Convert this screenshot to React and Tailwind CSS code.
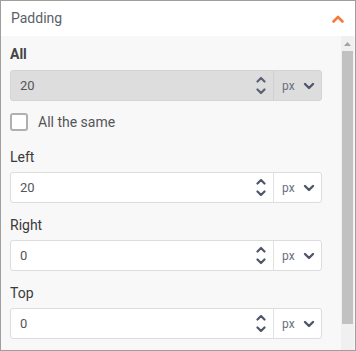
import { useState } from "react";

function Spinner({ muted }) {
    const c = muted ? "#5a6275" : "#4f5668";
    return (
        <div className="flex flex-col items-center justify-center gap-[5px] w-[14px] mr-[5px]">
            <svg width="10" height="7" viewBox="0 0 10 7">
                <path d="M1.5 5.5 L5 2 L8.5 5.5" fill="none" stroke={c} strokeWidth="2.2" strokeLinecap="round" strokeLinejoin="round" />
            </svg>
            <svg width="10" height="7" viewBox="0 0 10 7">
                <path d="M1.5 1.5 L5 5 L8.5 1.5" fill="none" stroke={c} strokeWidth="2.2" strokeLinecap="round" strokeLinejoin="round" />
            </svg>
        </div>
    );
}

function NumberField({ value, disabled }) {
    return (
        <div
            className={
                "flex h-[31px] w-[312px] rounded-[3px] border " +
                (disabled ? "bg-[#dddddd] border-[#d4d4d4]" : "bg-white border-[#dcdcdc]")
            }
        >
            <div className="flex flex-1 items-center pl-[9px]">
                <span className="flex-1 text-[13px] text-[#555]">{value}</span>
                <Spinner muted={disabled} />
            </div>
            <div className={"flex w-[48px] items-center justify-between pl-[8px] pr-[6px] border-l " + (disabled ? "border-[#d0d0d0]" : "border-[#e2e2e2]")}>
                <span className="text-[12px] text-[#6b7080]">px</span>
                <svg width="12" height="8" viewBox="0 0 12 8">
                    <path d="M2 2 L6 6 L10 2" fill="none" stroke="#4f5668" strokeWidth="2.4" strokeLinecap="round" strokeLinejoin="round" />
                </svg>
            </div>
        </div>
    );
}

function Label({ children, bold }) {
    return (
        <div className={"h-[20px] leading-[20px] text-[14px] " + (bold ? "font-bold text-[#444]" : "font-normal text-[#3a3a3a]")}>
            {children}
        </div>
    );
}

export default function App() {
    const [same, setSame] = useState(false);

    return (
        <div
            className="w-[356px] h-[351px] border border-[#9e9e9e] bg-white flex flex-col overflow-hidden"
            style={{ fontFamily: "Roboto, 'Liberation Sans', sans-serif" }}
        >
            <div className="h-[35px] shrink-0 flex items-center justify-between pl-[10px] pr-[10px] bg-white">
                <span className="text-[14px] text-[#5b5f6b]">Padding</span>
                <svg width="14" height="10" viewBox="0 0 14 10">
                    <path d="M2.5 7.5 L7 3 L11.5 7.5" fill="none" stroke="#f47b3a" strokeWidth="2.6" strokeLinecap="round" strokeLinejoin="round" />
                </svg>
            </div>

            <div className="flex flex-1 min-h-0 bg-[#f8f8f8]">
                <div className="flex-1 pl-[9px] pt-[8px]">
                    <Label bold>All</Label>
                    <div className="mt-[6px]">
                        <NumberField value="20" disabled />
                    </div>

                    <label className="mt-[12px] flex items-center h-[18px] cursor-pointer">
                        <input
                            type="checkbox"
                            checked={same}
                            onChange={() => setSame(!same)}
                            className="appearance-none w-[18px] h-[18px] rounded-[3px] border-2 border-[#b0b0b0] bg-white"
                        />
                        <span className="ml-[10px] text-[14px] text-[#555]">All the same</span>
                    </label>

                    <div className="mt-[16px]">
                        <Label>Left</Label>
                    </div>
                    <div className="mt-[5px]">
                        <NumberField value="20" />
                    </div>

                    <div className="mt-[12px]">
                        <Label>Right</Label>
                    </div>
                    <div className="mt-[5px]">
                        <NumberField value="0" />
                    </div>

                    <div className="mt-[12px]">
                        <Label>Top</Label>
                    </div>
                    <div className="mt-[5px]">
                        <NumberField value="0" />
                    </div>
                </div>

                <div className="w-[13px] shrink-0 mr-[1px] bg-[#f0f0f0] flex flex-col items-center">
                    <div className="h-[15px] flex items-center justify-center">
                        <svg width="7" height="4" viewBox="0 0 7 4">
                            <path d="M0 4 L3.5 0 L7 4 Z" fill="#a3a3a3" />
                        </svg>
                    </div>
                    <div className="w-[11px] h-[273px] bg-[#c1c1c1]" />
                </div>
            </div>
        </div>
    );
}
